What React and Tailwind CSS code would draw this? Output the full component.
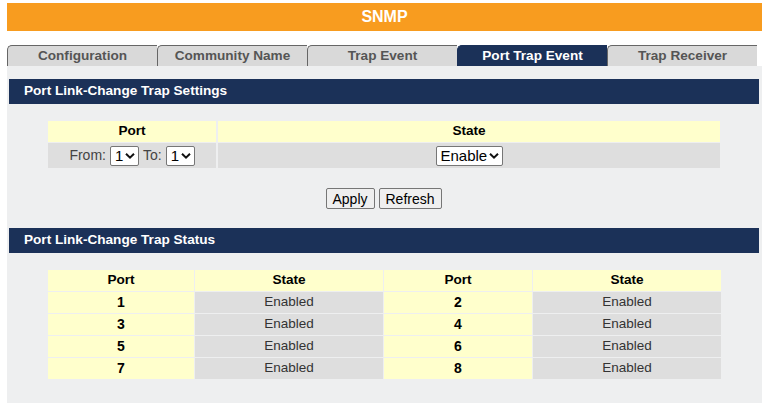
import React from 'react';

const tabs = ['Configuration', 'Community Name', 'Trap Event', 'Port Trap Event', 'Trap Receiver'];
const statusRows = [[1, 2], [3, 4], [5, 6], [7, 8]];

const Chevron = () => (
    <svg width="10" height="7" viewBox="0 0 10 7" className="pointer-events-none absolute right-[4px] top-1/2 -translate-y-1/2">
        <path d="M1 1.2 L5 5.2 L9 1.2" fill="none" stroke="#111" strokeWidth="2" />
    </svg>
);

const Select = ({ value, width }) => (
    <span className={`relative inline-block h-[20px] ${width}`}>
        <select
            defaultValue={value}
            className="h-full w-full appearance-none rounded-[2px] border border-[#767676] bg-white pl-[4px] text-[15px] leading-[18px] text-black"
        >
            <option>{value}</option>
        </select>
        <Chevron />
    </span>
);

const Bar = ({ children, mt }) => (
    <div className={`ml-[2px] mr-[3px] ${mt} flex h-[25px] items-center bg-[#1b3158] pl-[15px] text-[13.6px] font-bold text-white`}>
        {children}
    </div>
);

export default function App() {
    return (
        <div className="h-[412px] w-[770px] bg-white pt-[3px] font-['Liberation_Sans',Arial,sans-serif]">
            <div className="mx-[7px] flex h-[28px] w-[755px] items-center justify-center bg-[#f89c1f] text-[16px] font-bold text-white">
                SNMP
            </div>

            <div className="ml-[7px] mt-[14px] flex h-[21px]">
                {tabs.map((tab) => (
                    <div
                        key={tab}
                        className={`flex w-[150px] items-center justify-center rounded-tl-[5px] border-l border-t text-[13.6px] font-bold ${tab === 'Port Trap Event'
                            ? 'border-[#1b3158] bg-[#1b3158] text-white'
                            : 'border-[#666] bg-[#d9d9d9] text-[#555]'
                            }`}
                    >
                        {tab}
                    </div>
                ))}
            </div>

            <div className="ml-[7px] w-[755px] bg-[#eeeff0] pb-[24px] pt-[13px]">
                <Bar mt="mt-0">Port Link-Change Trap Settings</Bar>

                <div className="ml-[41px] mt-[17px] grid w-[672px] grid-cols-[168px_1fr] gap-x-[2px] gap-y-px text-[13.6px]">
                    <div className="flex h-[21px] items-center justify-center bg-[#ffffcc] font-bold text-black">Port</div>
                    <div className="flex h-[21px] items-center justify-center bg-[#ffffcc] font-bold text-black">State</div>
                    <div className="flex h-[25px] items-center justify-center gap-[4px] bg-[#dedede] text-[14px] text-[#444]">
                        <span>From:</span>
                        <Select value="1" width="w-[29px]" />
                        <span>To:</span>
                        <Select value="1" width="w-[29px]" />
                    </div>
                    <div className="flex h-[25px] items-center justify-center bg-[#dedede]">
                        <Select value="Enable" width="w-[67px]" />
                    </div>
                </div>

                <div className="mt-[20px] flex justify-center gap-[4px] pr-[2px]">
                    <button className="h-[21px] w-[49px] rounded-[2px] border border-[#767676] bg-[#efefef] text-[14px] text-black">
                        Apply
                    </button>
                    <button className="h-[21px] w-[63px] rounded-[2px] border border-[#767676] bg-[#efefef] text-[14px] text-black">
                        Refresh
                    </button>
                </div>

                <Bar mt="mt-[19px]">Port Link-Change Trap Status</Bar>

                <div className="ml-[41px] mt-[17px] grid w-[673px] grid-cols-[146px_188px_148px_188px] gap-px text-[13.6px]">
                    {['Port', 'State', 'Port', 'State'].map((h, i) => (
                        <div key={i} className="flex h-[21px] items-center justify-center bg-[#ffffcc] font-bold text-black">
                            {h}
                        </div>
                    ))}
                    {statusRows.map(([a, b]) => (
                        <React.Fragment key={a}>
                            <div className="flex h-[21px] items-center justify-center bg-[#ffffcc] text-[14px] font-bold text-black">{a}</div>
                            <div className="flex h-[21px] items-center justify-center bg-[#dedede] text-[13.5px] text-[#333]">Enabled</div>
                            <div className="flex h-[21px] items-center justify-center bg-[#ffffcc] text-[14px] font-bold text-black">{b}</div>
                            <div className="flex h-[21px] items-center justify-center bg-[#dedede] text-[13.5px] text-[#333]">Enabled</div>
                        </React.Fragment>
                    ))}
                </div>
            </div>
        </div>
    );
}
